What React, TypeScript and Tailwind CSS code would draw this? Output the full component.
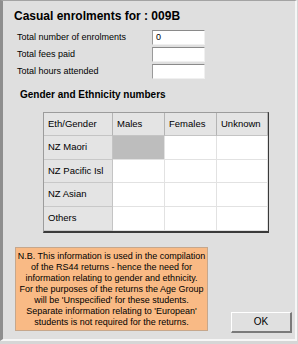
import React from "react";

// Casual enrolments dialog (old Windows style form)

const ROWS = ["NZ Maori", "NZ Pacific Isl", "NZ Asian", "Others"];
const COLS = ["Males", "Females", "Unknown"];
const ROW_H = ["h-[24px]", "h-[23px]", "h-[24px]", "h-[24px]"];

const NOTE_LINES = [
  "N.B. This information is used in the compilation",
  "of the RS44 returns - hence the need for",
  "information relating to gender and ethnicity.",
  "For the purposes of the returns the Age Group",
  "will be 'Unspecified' for these students.",
  "Separate information relating to 'European'",
  "students is not required for the returns.",
];

function Field({ value }: { value?: string }) {
  return (
    <div className="w-[53px] h-[15px] bg-white border-t border-l border-t-[#8a8a8a] border-l-[#9a9a9a] border-r border-b border-r-[#f0f0f0] border-b-[#f0f0f0] text-[9px] leading-[13px] pl-[3px]">
      {value}
    </div>
  );
}

export default function App() {
  return (
    <div className="w-[298px] h-[344px] bg-[#d6d6d6] font-['Liberation_Sans',Arial,sans-serif] text-black">
      <div className="h-[341px] w-[297px] bg-[#dfdfdf] border-l-[3px] border-l-[#8e8e8e] border-t border-t-[#a3a3a3] border-r-2 border-r-[#f6f6f6] border-b-2 border-b-[#f6f6f6] flex flex-col">
        {/* Title */}
        <div className="pl-[11px] pt-[8px] text-[12px] leading-[14px] font-bold whitespace-nowrap">
          Casual enrolments for : 009B
        </div>

        {/* Totals */}
        <div className="mt-[7px] pl-[14px] flex flex-col gap-[2px]">
          <div className="flex items-center">
            <span className="w-[135px] text-[9px] leading-[15px]">Total number of enrolments</span>
            <Field value="0" />
          </div>
          <div className="flex items-center">
            <span className="w-[135px] text-[9px] leading-[15px]">Total fees paid</span>
            <Field />
          </div>
          <div className="flex items-center">
            <span className="w-[135px] text-[9px] leading-[15px]">Total hours attended</span>
            <Field />
          </div>
        </div>

        {/* Gender and ethnicity */}
        <div className="mt-[10px] pl-[17px] text-[10px] leading-[12px] font-bold">
          Gender and Ethnicity numbers
        </div>

        <div className="mt-[11px] ml-[40px] w-[226px] border-t border-l border-t-[#9c9c9c] border-l-[#9c9c9c] border-r-2 border-b-2 border-r-[#3a3a3a] border-b-[#3a3a3a] bg-white">
          <div className="grid grid-cols-[69px_52px_52px_51px] text-[9.5px]">
            <div className="h-[23px] flex items-center pl-[4px] bg-[#e4e4e4] border-r border-b border-r-[#b4b4b4] border-b-[#c4c4c4]">
              Eth/Gender
            </div>
            {COLS.map((c) => (
              <div
                key={c}
                className="h-[23px] flex items-center pl-[4px] bg-[#e4e4e4] border-r border-b border-r-[#b4b4b4] border-b-[#c4c4c4]"
              >
                {c}
              </div>
            ))}
            {ROWS.map((r, ri) => (
              <React.Fragment key={r}>
                <div
                  className={
                    ROW_H[ri] +
                    " flex items-center pl-[4px] bg-[#e4e4e4] border-r border-b border-r-[#c4c4c4] border-b-[#c8c8c8]"
                  }
                >
                  {r}
                </div>
                {COLS.map((c, ci) => (
                  <div
                    key={c}
                    className={
                      ROW_H[ri] +
                      " border-r border-b border-r-[#e2e2e2] border-b-[#e2e2e2] " +
                      (ri === 0 && ci === 0 ? "bg-[#bdbdbd]" : "bg-white")
                    }
                  />
                ))}
              </React.Fragment>
            ))}
          </div>
        </div>

        {/* Note and OK */}
        <div className="mt-[14px] flex items-end">
          <div className="ml-[12px] w-[193px] h-[84px] bg-[#f9ba85] border border-[#c6a78c] flex flex-col items-center justify-center text-[9px] leading-[11px] whitespace-nowrap">
            {NOTE_LINES.map((l) => (
              <div key={l}>{l}</div>
            ))}
          </div>
          <button className="ml-[23px] mb-[-2px] w-[61px] h-[21px] bg-[#e0e0e0] border-t border-l border-t-white border-l-white border-r-2 border-b-2 border-r-[#7a7a7a] border-b-[#7a7a7a] text-[10px] leading-none">
            OK
          </button>
        </div>
      </div>
    </div>
  );
}
